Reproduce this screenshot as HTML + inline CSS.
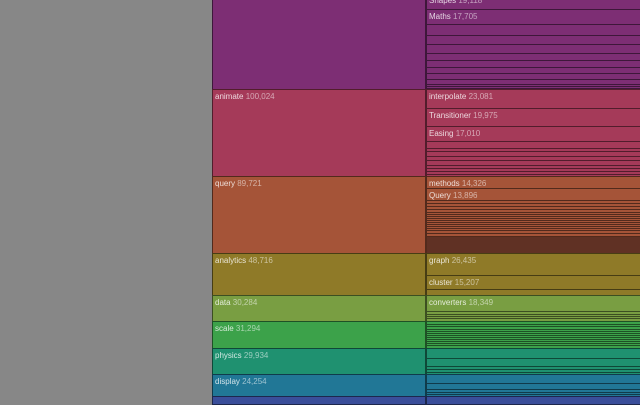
<!DOCTYPE html>
<html><head><meta charset="utf-8"><style>
html,body{margin:0;padding:0;width:640px;height:400px;overflow:hidden;background:#878787;font-family:"Liberation Sans",sans-serif;}
.c{position:absolute;box-sizing:border-box;border:1px solid rgba(0,0,0,0.5);overflow:hidden;font-size:8px;line-height:10px;padding:2px 0 0 2px;color:rgba(255,255,255,0.8);white-space:nowrap}
.c span{color:rgba(255,255,255,0.55)}
</style></head><body>
<div id="r"></div>
<script>
var R=document.getElementById('r');
function c(x,y,w,h,col,t,v){var d=document.createElement('div');d.className='c';d.style.cssText='left:'+x+'px;top:'+y+'px;width:'+w+'px;height:'+h+'px;background:'+col;if(t)d.innerHTML=t+' <span>'+v+'</span>';R.appendChild(d);}
var L=213,M=426;
var g=[
['#7d2e74',-5,89,'',''],
['#a53a59',89,176,'animate','100,024'],
['#a55438',176,253,'query','89,721'],
['#8f7a28',253,295,'analytics','48,716'],
['#799e42',295,321,'data','30,284'],
['#3ca24a',321,348,'scale','31,294'],
['#1f9170',348,374,'physics','29,934'],
['#217796',374,396,'display','24,254'],
['#3a4e9a',396,404,'','']];
g.forEach(function(a){c(L-1,a[1],M-L+1,a[2]-a[1]+1,a[0],a[3],a[4]);});
var kids=[
['#7d2e74',[[-7,9,'Shapes','19,118'],[9,24,'Maths','17,705']],[24,35,44,53,60,67,73,79,84,86,88,89]],
['#a53a59',[[89,108,'interpolate','23,081'],[108,126,'Transitioner','19,975'],[126,141,'Easing','17,010']],[141,148,151,156,160,165,168,171,174,176]],
['#a55438',[[176,188,'methods','14,326'],[188,200,'Query','13,896']],[203,206,209,212,214,216,218,220,222,224,226,228,230,233,236,253]],
['#8f7a28',[[253,275,'graph','26,435'],[275,289,'cluster','15,207']],[289,295]],
['#799e42',[[295,311,'converters','18,349']],[311,314,316,318,321]],
['#3ca24a',[],[324,326,329,331,333,335,337,339,341,343,345,348]],
['#1f9170',[],[358,366,369,372,374]],
['#217796',[],[383,389,392,394,396]],
['#3a4e9a',[],[404]]];
kids.forEach(function(k){var col=k[0];var last;k[1].forEach(function(a){c(M,a[0],215,a[1]-a[0]+1,col,a[2],a[3]);last=a[1];});
 if(last===undefined){var idx=kids.indexOf(k);last=g[idx][1];}
 k[2].forEach(function(y){if(y>last){c(M,last,215,y-last+1,col);last=y;}});});
var d=document.createElement('div');d.style.cssText='position:absolute;left:427px;top:237px;width:213px;height:16px;background:rgba(40,20,20,0.55)';R.appendChild(d);
</script>
</body></html>
